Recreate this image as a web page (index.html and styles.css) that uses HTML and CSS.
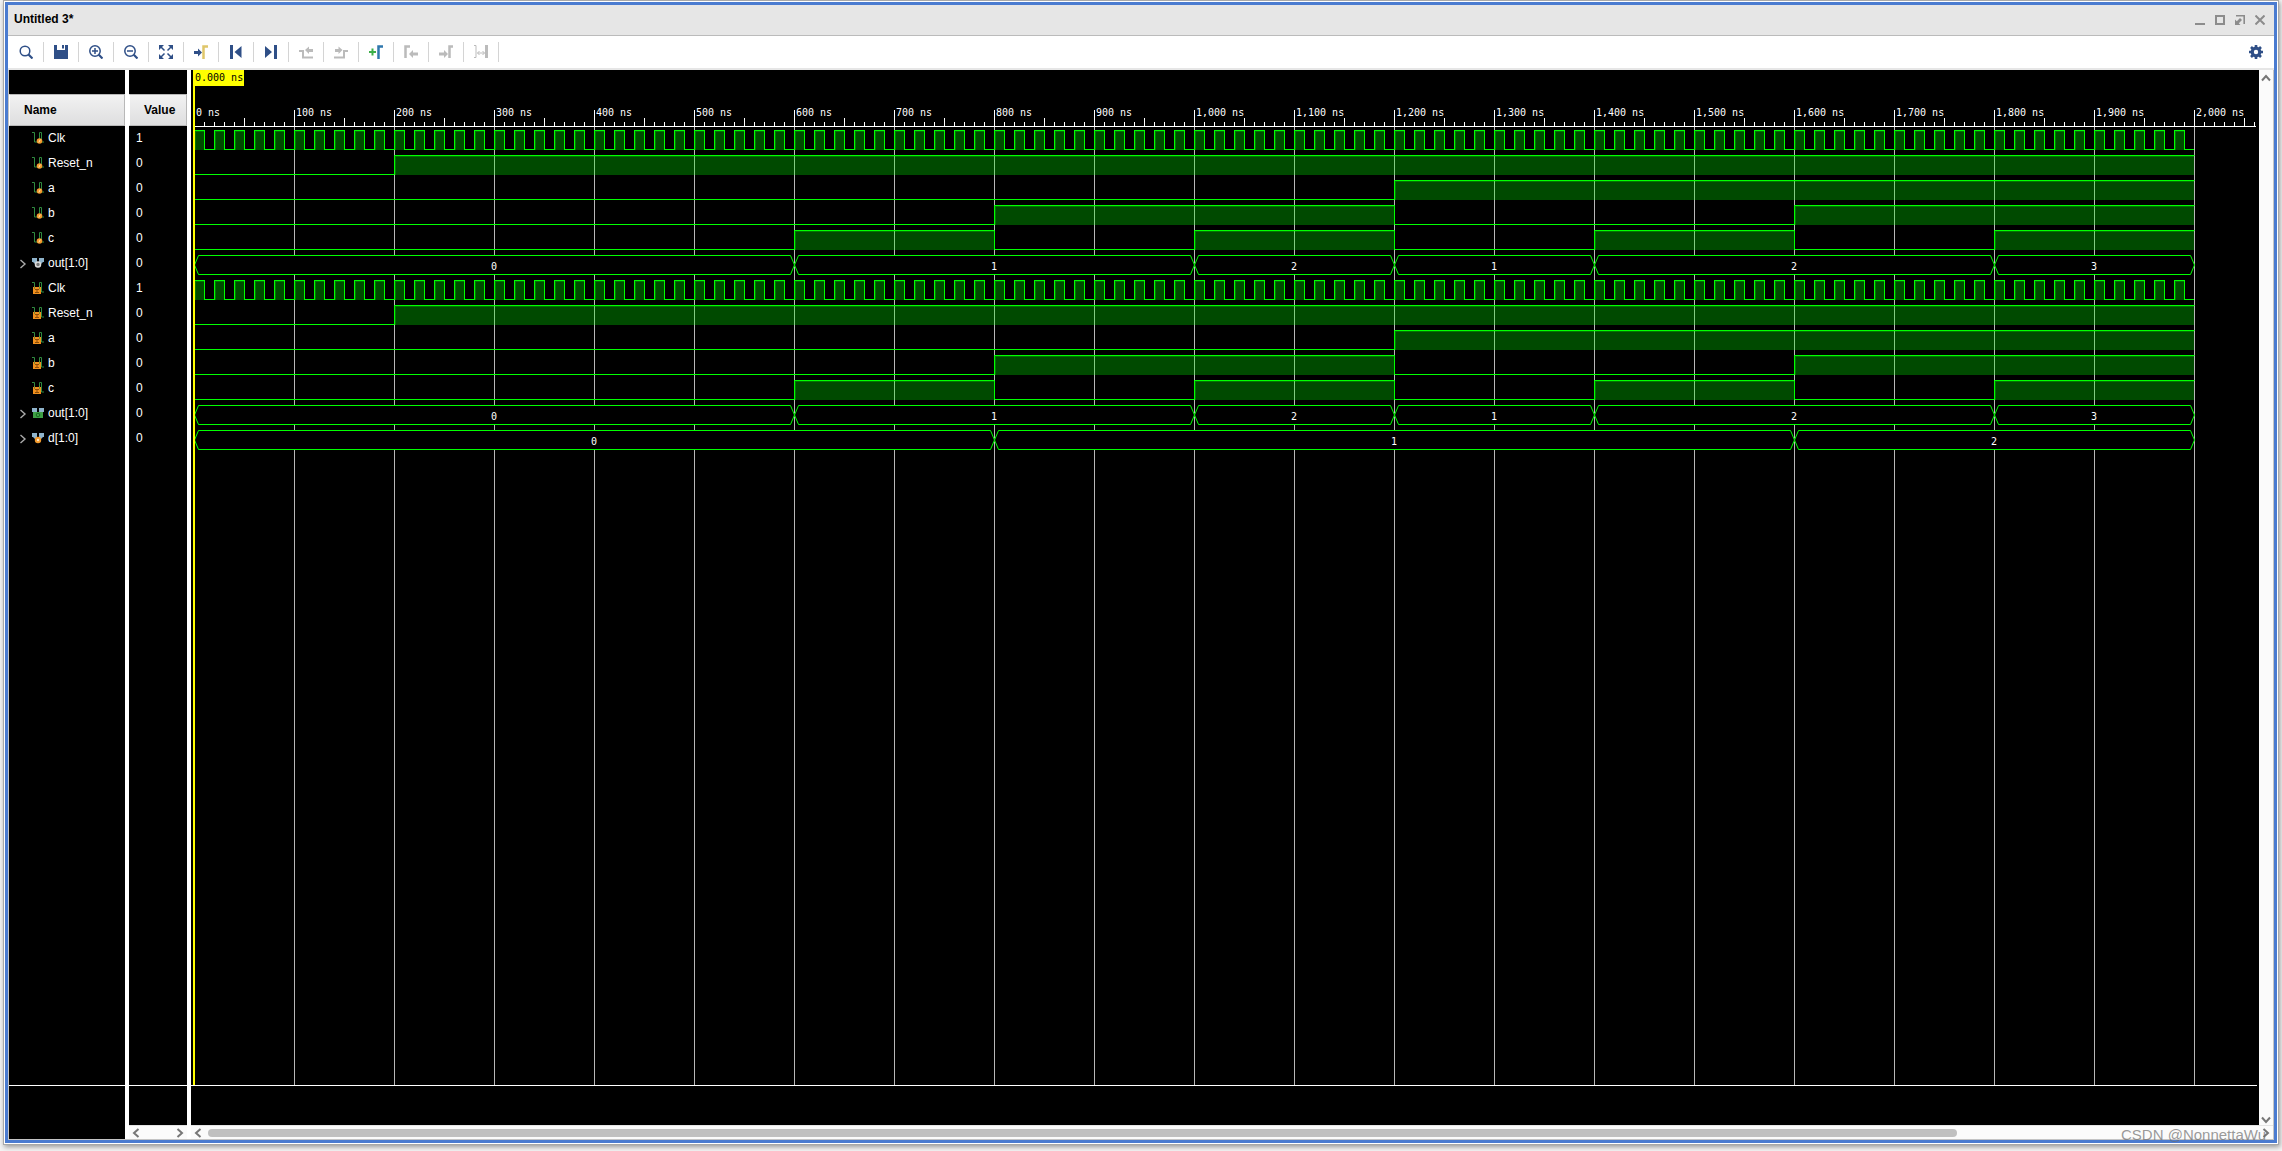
FILE: index.html
```html
<!DOCTYPE html>
<html lang="en">
<head>
<meta charset="utf-8">
<title>Untitled 3*</title>
<link rel="stylesheet" href="styles.css">
</head>
<body>
<svg class="defs" aria-hidden="true">
  <defs>
    <symbol id="sig" viewBox="0 0 12 12"><path d="M0 .5h2.500V10h5V.5h2V10H12" fill="none" stroke="#2f8a3f"/></symbol>
    <symbol id="in" viewBox="0 0 12 12"><use href="#sig"/><circle cx="7.500" cy="9" r="2.800" fill="#f39a2c"/><path d="M6.800 10.500l1.500-3" stroke="#ffe0b0"/></symbol>
    <symbol id="reg" viewBox="0 0 12 12"><use href="#sig"/><path d="M1 5h8v7H1z" fill="#f0901e"/><path d="M3 7.500h4M5 7.500v3M3 10.500h4" stroke="#8a4d08"/><path d="M2.500 4v3M7.500 4v3" stroke="#7a8a30"/></symbol>
    <symbol id="bus" viewBox="0 0 12 12"><path d="M0 1h5v4H0zM7 1h5v4H7zM1 5h10l-3 3H4z" fill="#8fb4cc"/></symbol>
    <symbol id="busout" viewBox="0 0 12 12"><use href="#bus"/><circle cx="6" cy="7.500" r="2.500" fill="#777" stroke="#ddd" stroke-width="1.500"/></symbol>
    <symbol id="busgreen" viewBox="0 0 12 12"><use href="#bus"/><path d="M1 5h10v6H1z" fill="#3fa046"/><circle cx="6" cy="8" r="1.800" fill="none" stroke="#176b20"/></symbol>
    <symbol id="busorange" viewBox="0 0 12 12"><use href="#bus"/><circle cx="6" cy="8" r="3.200" fill="#f39a2c"/><circle cx="6" cy="8" r="1.200" fill="#ffe8c8"/></symbol>
    <symbol id="left" viewBox="0 0 8 10"><path d="M6.500 1L2 5l4.500 4" fill="none" stroke="#777" stroke-width="2"/></symbol>
    <symbol id="right" viewBox="0 0 8 10"><path d="M1.500 1L6 5 1.500 9" fill="none" stroke="#777" stroke-width="2"/></symbol>
    <symbol id="twist" viewBox="0 0 8 10"><path d="M1.500 1L6 5 1.500 9" fill="none" stroke="#aaa" stroke-width="1.400"/></symbol>
    <pattern id="ticks" width="10" height="4" patternUnits="userSpaceOnUse" y="52"><path d="M0 0h1v4H0z" fill="#fff"/></pattern>
    <pattern id="halfticks" width="50" height="8" patternUnits="userSpaceOnUse" y="48"><path d="M0 0h1v8H0z" fill="#fff"/></pattern>
    <pattern id="hundreds" width="100" height="16" patternUnits="userSpaceOnUse" y="40"><path d="M0 0h1v16H0z" fill="#fff"/></pattern>
    <pattern id="grid" width="100" height="100" patternUnits="userSpaceOnUse"><path d="M0 0h1v100H0z" fill="#b8b8b8"/></pattern>
    <pattern id="clock" width="20" height="20" patternUnits="userSpaceOnUse"><path d="M0 0h10v20H0z" fill="#004b00"/><path d="M1 1h9v1H2v18H1z" fill="#007800"/><path d="M0 0h11v19h9v1H10V1H1v19H0z" fill="#0f0"/></pattern>
    <g id="clk"><rect width="2000" height="20" fill="url(#clock)"/></g>
    <g id="rst"><path class="high" d="M200 0h1800v20H200z"/><path class="edge" d="M201 1.500h1799M201.500 2v18"/><path class="line" d="M0 19.500h200.500V.5h1800"/></g>
    <g id="siga"><path class="high" d="M1200 0h800v20h-800z"/><path class="edge" d="M1201 1.500h799M1201.500 2v18"/><path class="line" d="M0 19.500h1200.500V.5h800"/></g>
    <g id="sigb"><path class="high" d="M800 0h400v20H800zM1600 0h400v20h-400z"/><path class="edge" d="M801 1.500h399M801.500 2v18M1601 1.500h399M1601.500 2v18"/><path class="line" d="M0 19.500h800.500V.5h400v19h400V.5h400"/></g>
    <g id="sigc"><path class="high" d="M600 0h200v20H600zM1000 0h200v20h-200zM1400 0h200v20h-200zM1800 0h200v20h-200z"/><path class="edge" d="M601 1.500h199M601.500 2v18M1001 1.500h199M1001.500 2v18M1401 1.500h199M1401.500 2v18M1801 1.500h199M1801.500 2v18"/><path class="line" d="M0 19.500h600.500V.5h200v19h200V.5h200v19h200V.5h200v19h200V.5h200"/></g>
    <g id="out">
      <path class="mask" d="M0 0h596l4 10 4-10h392l4 10 4-10h192l4 10 4-10h192l4 10 4-10h392l4 10 4-10h192l4 10-4 10h-192l-4-10-4 10h-392l-4-10-4 10h-192l-4-10-4 10h-192l-4-10-4 10H604l-4-10-4 10H0z"/>
      <path class="line" d="M.5 10l4-9.500h592l8 19h392l8-19h192l8 19h192l8-19h392l8 19h192l4-9.500M.5 10l4 9.500h592l8-19h392l8 19h192l8-19h192l8 19h392l8-19h192l4 9.500"/>
      <g class="mono mid"><text x="300" y="15">0</text><text x="800" y="15">1</text><text x="1100" y="15">2</text><text x="1300" y="15">1</text><text x="1600" y="15">2</text><text x="1900" y="15">3</text></g>
    </g>
    <g id="d">
      <path class="mask" d="M0 0h796l4 10 4-10h792l4 10 4-10h392l4 10-4 10h-392l-4-10-4 10H804l-4-10-4 10H0z"/>
      <path class="line" d="M.5 10l4-9.500h792l8 19h792l8-19h392l4 9.500M.5 10l4 9.500h792l8-19h792l8 19h392l4-9.500"/>
      <g class="mono mid"><text x="400" y="15">0</text><text x="1200" y="15">1</text><text x="1800" y="15">2</text></g>
    </g>
  </defs>
</svg>

<main class="window">
  <header class="titlebar">
    <h1>Untitled 3*</h1>
    <div class="winbtns">
      <button aria-label="Minimize"><svg viewBox="0 0 10 10"><path d="M0 9h10" stroke="#8c8c8c" stroke-width="2"/></svg></button>
      <button aria-label="Maximize"><svg viewBox="0 0 10 10"><path d="M1 1h8v8H1z" fill="none" stroke="#8c8c8c" stroke-width="2"/></svg></button>
      <button aria-label="Float"><svg viewBox="0 0 10 10"><path d="M1 .8h8.200V9" fill="none" stroke="#8c8c8c" stroke-width="1.600"/><path d="M0 4.500V10h5.500L3.800 8.200 7 5 5 3 1.800 6.200z" fill="#8c8c8c"/></svg></button>
      <button aria-label="Close"><svg viewBox="0 0 10 10"><path d="M.5.5l9 9M9.500.5l-9 9" stroke="#8c8c8c" stroke-width="2"/></svg></button>
    </div>
  </header>

  <nav class="toolbar">
    <button aria-label="Find"><svg viewBox="0 0 14 14"><circle cx="6" cy="6" r="4.800" fill="none" stroke="#2f4f87" stroke-width="1.500"/><path d="M9.500 9.500L13.500 13.500" stroke="#2f4f87" stroke-width="2.200"/></svg></button>
    <button aria-label="Save"><svg viewBox="0 0 14 14"><path d="M0 0h3v5h8V0h3v14H0zM8 0h2v3.500H8z" fill="#2f4f87"/></svg></button>
    <button aria-label="Zoom in"><svg viewBox="0 0 14 14"><circle cx="6" cy="6" r="5.200" fill="none" stroke="#2f4f87" stroke-width="1.500"/><path d="M3 6h6M6 3v6" stroke="#2f4f87" stroke-width="1.500"/><path d="M9.800 9.800L13.500 13.500" stroke="#2f4f87" stroke-width="2.200"/></svg></button>
    <button aria-label="Zoom out"><svg viewBox="0 0 14 14"><circle cx="6" cy="6" r="5.200" fill="none" stroke="#2f4f87" stroke-width="1.500"/><path d="M3 6h6" stroke="#2f4f87" stroke-width="1.500"/><path d="M9.800 9.800L13.500 13.500" stroke="#2f4f87" stroke-width="2.200"/></svg></button>
    <button aria-label="Zoom fit"><svg viewBox="0 0 14 14"><path d="M0 0h5L0 5zM14 0v5L9 0zM0 14V9l5 5zM14 14H9l5-5z" fill="#2f4f87"/><path d="M2 2l3.500 3.500M12 2L8.500 5.500M2 12l3.500-3.500M12 12L8.500 8.500" stroke="#2f4f87" stroke-width="1.500"/></svg></button>
    <button aria-label="Go to cursor"><svg viewBox="0 0 14 14"><path d="M0 6h4V3.500l4 4-4 4V9H0z" fill="#2f4f87"/><path d="M9.500 14V1.500H14" fill="none" stroke="#dfc66a" stroke-width="2.500"/></svg></button>
    <button aria-label="Go to start"><svg viewBox="0 0 14 14"><path d="M1 0h3v14H1zM12.500 1v12L5.500 7z" fill="#2f4f87"/></svg></button>
    <button aria-label="Go to end"><svg viewBox="0 0 14 14"><path d="M10 0h3v14h-3zM1 1v12l7-6z" fill="#2f4f87"/></svg></button>
    <button aria-label="Previous transition" disabled><svg viewBox="0 0 14 14"><path d="M0 6h4v6.500h10" fill="none" stroke="#bbb" stroke-width="2"/><path d="M6 5l4-3.500V4h4v3h-4v2z" fill="#bbb"/></svg></button>
    <button aria-label="Next transition" disabled><svg viewBox="0 0 14 14"><path d="M14 6h-4v6.500H0" fill="none" stroke="#bbb" stroke-width="2"/><path d="M8.500 5l-4-3.500V4H1v3h3.500v2z" fill="#bbb"/></svg></button>
    <button aria-label="Add marker"><svg viewBox="0 0 14 14"><path d="M0 7h7M3.500 3.500v7" stroke="#3daf49" stroke-width="2"/><path d="M9.500 14V1.500H14" fill="none" stroke="#2f77ad" stroke-width="2.500"/></svg></button>
    <button aria-label="Previous marker" disabled><svg viewBox="0 0 14 14"><path d="M1.500 13V1.500H6" fill="none" stroke="#bbb" stroke-width="2.500"/><path d="M5 9l4-4v2.500h5v3H9V13z" fill="#bbb"/></svg></button>
    <button aria-label="Next marker" disabled><svg viewBox="0 0 14 14"><path d="M10.500 13V1.500H14" fill="none" stroke="#bbb" stroke-width="2.500"/><path d="M9 9L5 5v2.500H0v3h5V13z" fill="#bbb"/></svg></button>
    <button aria-label="Swap cursors" disabled><svg viewBox="0 0 14 14"><path d="M0 .5h2v12H0" fill="none" stroke="#bbb"/><path d="M12.500 0v13" stroke="#bbb" stroke-width="3"/><path d="M3.500 8h7M5.500 6l-2 2 2 2M8.500 6l2 2-2 2" fill="none" stroke="#bbb"/></svg></button>
    <span class="spacer"></span>
    <button class="gear" aria-label="Settings"><svg viewBox="0 0 14 14"><circle cx="7" cy="7" r="3.800" fill="none" stroke="#2f4f87" stroke-width="3.200"/><path d="M7 0v2.500M7 11.500V14M0 7h2.500M11.500 7H14M2 2l2 2M10 10l2 2M2 12l2-2M10 4l2-2" stroke="#2f4f87" stroke-width="2.600"/></svg></button>
  </nav>

  <div class="panes">
    <section class="pane names">
      <table>
        <thead><tr><th scope="col">Name</th></tr></thead>
        <tbody>
          <tr><td><svg class="ico"><use href="#in"/></svg>Clk</td></tr>
          <tr><td><svg class="ico"><use href="#in"/></svg>Reset_n</td></tr>
          <tr><td><svg class="ico"><use href="#in"/></svg>a</td></tr>
          <tr><td><svg class="ico"><use href="#in"/></svg>b</td></tr>
          <tr><td><svg class="ico"><use href="#in"/></svg>c</td></tr>
          <tr><td class="tree"><button aria-label="Expand out"><svg><use href="#twist"/></svg></button><svg class="ico"><use href="#busout"/></svg>out[1:0]</td></tr>
          <tr><td><svg class="ico"><use href="#reg"/></svg>Clk</td></tr>
          <tr><td><svg class="ico"><use href="#reg"/></svg>Reset_n</td></tr>
          <tr><td><svg class="ico"><use href="#reg"/></svg>a</td></tr>
          <tr><td><svg class="ico"><use href="#reg"/></svg>b</td></tr>
          <tr><td><svg class="ico"><use href="#reg"/></svg>c</td></tr>
          <tr><td class="tree"><button aria-label="Expand out"><svg><use href="#twist"/></svg></button><svg class="ico"><use href="#busgreen"/></svg>out[1:0]</td></tr>
          <tr><td class="tree"><button aria-label="Expand d"><svg><use href="#twist"/></svg></button><svg class="ico"><use href="#busorange"/></svg>d[1:0]</td></tr>
        </tbody>
      </table>
      <div class="rest"></div>
      <div class="foot tall"></div>
    </section>

    <section class="pane values">
      <table>
        <thead><tr><th scope="col">Value</th></tr></thead>
        <tbody>
          <tr><td>1</td></tr><tr><td>0</td></tr><tr><td>0</td></tr><tr><td>0</td></tr><tr><td>0</td></tr><tr><td>0</td></tr>
          <tr><td>1</td></tr><tr><td>0</td></tr><tr><td>0</td></tr><tr><td>0</td></tr><tr><td>0</td></tr><tr><td>0</td></tr><tr><td>0</td></tr>
        </tbody>
      </table>
      <div class="rest"></div>
      <div class="foot"></div>
      <div class="hbar">
        <button aria-label="Scroll left"><svg><use href="#left"/></svg></button>
        <button aria-label="Scroll right"><svg><use href="#right"/></svg></button>
      </div>
    </section>

    <section class="pane waves">
      <div class="row">
        <div class="view">
          <div class="plotbox">
            <svg class="plot">
              <svg x="3" width="100%" height="100%" overflow="visible">
                <rect x="0" y="56" width="2001" height="100%" fill="url(#grid)"/>
                <rect y="52" width="2062" height="4" fill="url(#ticks)"/>
                <rect y="48" width="2062" height="8" fill="url(#halfticks)"/>
                <rect y="40" width="2062" height="16" fill="url(#hundreds)"/>
                <rect y="56" width="2062" height="1" fill="#fff"/>
                <g class="mono">
                  <text x="2" y="46">0 ns</text><text x="102" y="46">100 ns</text><text x="202" y="46">200 ns</text><text x="302" y="46">300 ns</text><text x="402" y="46">400 ns</text><text x="502" y="46">500 ns</text><text x="602" y="46">600 ns</text><text x="702" y="46">700 ns</text><text x="802" y="46">800 ns</text><text x="902" y="46">900 ns</text><text x="1002" y="46">1,000 ns</text><text x="1102" y="46">1,100 ns</text><text x="1202" y="46">1,200 ns</text><text x="1302" y="46">1,300 ns</text><text x="1402" y="46">1,400 ns</text><text x="1502" y="46">1,500 ns</text><text x="1602" y="46">1,600 ns</text><text x="1702" y="46">1,700 ns</text><text x="1802" y="46">1,800 ns</text><text x="1902" y="46">1,900 ns</text><text x="2002" y="46">2,000 ns</text>
                </g>
                <g transform="translate(0 60)">
                  <use href="#clk"/><use href="#rst" y="25"/><use href="#siga" y="50"/><use href="#sigb" y="75"/><use href="#sigc" y="100"/><use href="#out" y="125"/>
                  <use href="#clk" y="150"/><use href="#rst" y="175"/><use href="#siga" y="200"/><use href="#sigb" y="225"/><use href="#sigc" y="250"/><use href="#out" y="275"/><use href="#d" y="300"/>
                </g>
                <rect x="-1" width="2" height="100%" fill="#ff0"/>
              </svg>
            </svg>
            <output class="cursor">0.000 ns</output>
          </div>
          <div class="foot"></div>
        </div>
        <div class="vbar">
          <button aria-label="Scroll up"><svg viewBox="0 0 10 8"><path d="M1 6.500L5 2l4 4.500" fill="none" stroke="#777" stroke-width="2"/></svg></button>
          <button aria-label="Scroll down"><svg viewBox="0 0 10 8"><path d="M1 1.500L5 6l4-4.500" fill="none" stroke="#777" stroke-width="2"/></svg></button>
        </div>
      </div>
      <div class="hbar">
        <button aria-label="Scroll left"><svg><use href="#left"/></svg></button>
        <div class="track"><div class="thumb"></div></div>
        <button aria-label="Scroll right"><svg><use href="#right"/></svg></button>
      </div>
    </section>
  </div>
</main>
<div class="watermark">CSDN @NonnettaWu</div>
</body>
</html>
```
FILE: styles.css
```css
* { box-sizing: border-box; }
body {
  margin: 0;
  height: 100vh;
  padding: 1px 4px 7px;
  background: #f4f4f4;
  font: 12px/16px "Liberation Sans", Arial, sans-serif;
  color: #000;
  overflow: hidden;
}
button {
  display: flex;
  align-items: center;
  justify-content: center;
  padding: 0;
  border: 0;
  background: none;
}
.defs { position: absolute; width: 0; height: 0; }

.window {
  height: 100%;
  display: flex;
  flex-direction: column;
  border: 1px solid #fff;
  box-shadow: 0 0 0 1px #a8a8a8, 1px 2px 5px 1px #999;
  outline: 3px solid #4a7bd0;
  outline-offset: -4px;
  padding: 3px;
  background: #fff;
}

.titlebar {
  display: flex;
  align-items: center;
  justify-content: space-between;
  height: 31px;
  flex: none;
  padding: 0 9px 2px 6px;
  background: #e6e6e6;
  border-bottom: 1px solid #bbb;
}
.titlebar h1 { margin: 0; font-size: 12px; line-height: 16px; }
.winbtns { display: flex; gap: 10px; padding-top: 2px; }
.winbtns button, .winbtns svg { width: 10px; height: 10px; }

.toolbar {
  display: flex;
  align-items: center;
  height: 34px;
  flex: none;
  padding: 0 1px;
  background: #fff;
  border-bottom: 2px solid #e6e6e6;
}
.toolbar button {
  width: 35px;
  height: 20px;
  border-right: 1px solid #d4d4d4;
}
.toolbar svg { width: 14px; height: 14px; }
.toolbar .spacer { flex: 1; }
.toolbar .gear { border: 0; }

.panes {
  flex: 1;
  min-height: 0;
  display: flex;
  gap: 4px;
  border: 1px solid #c4c4c4;
  border-top: 0;
}
.pane {
  display: flex;
  flex-direction: column;
  min-height: 0;
}
.names, .values { background: #000; color: #fff; padding-top: 24px; }
.names { width: 116px; flex: none; }
.values { width: 58px; flex: none; }
.waves { flex: 1; min-width: 0; }

table { width: 100%; border-collapse: separate; border-spacing: 0; }
th {
  height: 32px;
  padding: 0 0 0 14px;
  border: 1px solid #b8b8b8;
  border-left-color: #fff;
  background: linear-gradient(#f2f2f2, #dededf);
  color: #000;
  text-align: left;
}
td { height: 25px; padding: 0 0 2px 23px; }
td.tree { padding-left: 10px; }
td .ico { width: 12px; height: 12px; margin-right: 4px; vertical-align: -2px; }
td button { display: inline-block; width: 8px; height: 10px; margin-right: 5px; vertical-align: -2px; }
td button svg { display: block; width: 8px; height: 10px; }
.values td { padding-left: 7px; }

.rest { flex: 1; border-bottom: 1px solid #fff; }
.foot { height: 39px; flex: none; background: #000; }
.foot.tall { height: 53px; }

.hbar {
  display: flex;
  align-items: center;
  justify-content: space-between;
  height: 14px;
  flex: none;
  padding: 0 2px;
  background: #fbfbfb;
  border-top: 1px solid #e4e4e4;
}
.hbar button, .hbar svg { width: 8px; height: 10px; }
.hbar button { margin: 0 1px; }
.values .hbar { padding: 0 2px; }
.track { flex: 1; padding: 0 5px; }
.thumb { width: 85.4%; height: 8px; border-radius: 4px; background: #c0c0c0; }

.row { flex: 1; min-height: 0; display: flex; }
.view { flex: 1; min-width: 0; display: flex; flex-direction: column; background: #000; }
.plotbox { position: relative; flex: 1; min-height: 0; margin: 0 2px 0 0; border-bottom: 1px solid #fff; }
.plot { display: block; width: 100%; height: 100%; overflow: hidden; }
.cursor {
  position: absolute;
  left: 2px;
  top: 0;
  padding: 0 1px 0 2px;
  height: 16px;
  background: #ff0;
  color: #000;
}
.mono, .cursor { font-family: "DejaVu Sans Mono", monospace; font-size: 10px; }
.mono { fill: #fff; }
.mid { text-anchor: middle; }
.high { fill: rgba(0, 255, 0, .29); }
.edge { fill: none; stroke: rgba(0, 255, 0, .25); }
.line { fill: none; stroke: #0f0; }
.mask { fill: #000; }

.vbar {
  width: 14px;
  flex: none;
  display: flex;
  flex-direction: column;
  align-items: center;
  justify-content: space-between;
  padding: 4px 0 1px;
  background: #fbfbfb;
}
.vbar svg { width: 10px; height: 8px; }

.watermark {
  position: absolute;
  right: 16px;
  bottom: 7px;
  font-size: 15px;
  line-height: 18px;
  color: rgba(110, 110, 110, .7);
}
```
